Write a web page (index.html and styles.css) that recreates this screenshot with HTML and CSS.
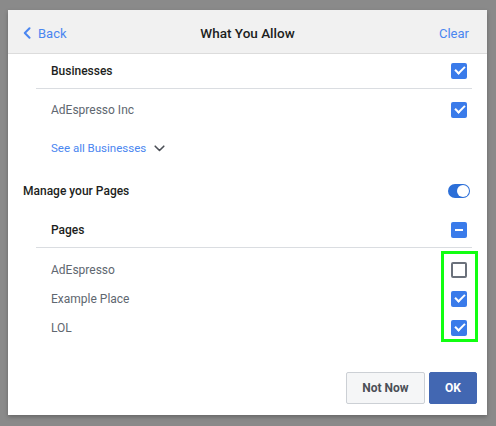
FILE: index.html
```html
<!DOCTYPE html>
<html>
<head>
<meta charset="utf-8">
<link rel="stylesheet" href="styles.css">
</head>
<body>
<div class="dialog">
  <div class="header">
    <a class="hlink back">
      <svg width="8" height="12" viewBox="0 0 8 12"><path d="M6.5 1.2 L1.8 6 L6.5 10.8" fill="none" stroke="#4a86f0" stroke-width="2" stroke-linecap="round" stroke-linejoin="round"/></svg>
      <span>Back</span>
    </a>
    <div class="title">What You Allow</div>
    <a class="hlink clear">Clear</a>
  </div>
  <div class="content">
    <div class="row head sub">
      <span class="label strong">Businesses</span>
      <span class="cb on"></span>
    </div>
    <div class="row item-tall sub">
      <span class="label muted">AdEspresso Inc</span>
      <span class="cb on"></span>
    </div>
    <div class="row seeall sub">
      <span class="link">See all Businesses</span>
      <svg class="chev" width="11" height="7" viewBox="0 0 11 7"><path d="M1.2 1.2 L5.5 5.5 L9.8 1.2" fill="none" stroke="#4b4f56" stroke-width="1.6" stroke-linecap="round" stroke-linejoin="round"/></svg>
    </div>
    <div class="row section">
      <span class="label strong">Manage your Pages</span>
      <span class="toggle"><span class="knob"></span></span>
    </div>
    <div class="row head sub pages">
      <span class="label strong">Pages</span>
      <span class="cb mixed"></span>
    </div>
    <div class="items">
      <div class="highlight"></div>
      <div class="row item sub">
        <span class="label muted">AdEspresso</span>
        <span class="cb off"></span>
      </div>
      <div class="row item sub">
        <span class="label muted">Example Place</span>
        <span class="cb on"></span>
      </div>
      <div class="row item sub">
        <span class="label muted">LOL</span>
        <span class="cb on"></span>
      </div>
    </div>
  </div>
  <div class="footer">
    <button class="btn secondary">Not Now</button>
    <button class="btn primary">OK</button>
  </div>
</div>
</body>
</html>
```

FILE: styles.css
```css
html, body {
  margin: 0;
  padding: 0;
}
body {
  background: #8a8a8a;
  width: 496px;
  height: 426px;
  padding: 10px 0 0 8px;
  box-sizing: border-box;
  font-family: Roboto, "Liberation Sans", Arial, sans-serif;
  overflow: hidden;
}
.dialog {
  width: 479px;
  height: 405px;
  background: #fff;
  display: flex;
  flex-direction: column;
  box-shadow: 0 2px 4px rgba(0,0,0,0.25);
}
.header {
  height: 40px;
  padding: 3px 18px 0 15px;
  background: #f1f1f1;
  border-bottom: 1px solid #dcdcdc;
  display: flex;
  align-items: center;
  justify-content: space-between;
  position: relative;
}
.hlink {
  color: #4a86f0;
  font-size: 13px;
  display: flex;
  align-items: center;
  gap: 7px;
}
.title {
  position: absolute;
  left: 0;
  right: 0;
  top: 3px;
  bottom: 0;
  display: flex;
  align-items: center;
  justify-content: center;
  font-size: 13.5px;
  font-weight: 500;
  color: #1c1e21;
  pointer-events: none;
}
.content {
  flex: 1;
  display: flex;
  flex-direction: column;
}
.row {
  display: flex;
  align-items: center;
  justify-content: space-between;
  padding-right: 20px;
  padding-left: 15px;
}
.row.sub {
  margin-left: 28px;
}
.row.head {
  height: 34px;
  border-bottom: 1px solid #dadde1;
  margin-right: 15px;
  padding-right: 5px;
}
.row.pages {
  height: 35px;
}
.row.item-tall {
  height: 42px;
}
.row.seeall {
  height: 34px;
  justify-content: flex-start;
  gap: 8px;
}
.row.section {
  height: 47px;
  padding-top: 4px;
  box-sizing: border-box;
}
.items {
  position: relative;
  padding-top: 7px;
}
.row.item {
  height: 29px;
}
.label {
  font-size: 12px;
}
.strong {
  font-weight: 500;
  color: #1c1e21;
}
.muted {
  color: #606770;
}
.link {
  font-size: 11.5px;
  color: #4a86f0;
}
.chev {
  margin-top: 1px;
}
.cb {
  width: 16px;
  height: 16px;
  box-sizing: border-box;
  border-radius: 2px;
  position: relative;
  flex: none;
}
.cb.on, .cb.mixed {
  background: #3a7bea;
}
.cb.on::after {
  content: "";
  position: absolute;
  left: 4px;
  top: 3px;
  width: 8px;
  height: 4px;
  border-left: 2px solid #fff;
  border-bottom: 2px solid #fff;
  transform: rotate(-45deg);
  transform-origin: center;
}
.cb.mixed::after {
  content: "";
  position: absolute;
  left: 4px;
  top: 7px;
  width: 8px;
  height: 2px;
  background: #fff;
}
.cb.off {
  border: 2px solid #6b717b;
  background: #fff;
}
.toggle {
  width: 22px;
  height: 14px;
  border-radius: 7px;
  background: #2c6fd8;
  position: relative;
  margin-right: -3px;
}
.knob {
  position: absolute;
  right: 1px;
  top: 1px;
  width: 12px;
  height: 12px;
  border-radius: 50%;
  background: #fff;
}
.highlight {
  position: absolute;
  left: 433px;
  top: 3px;
  width: 31px;
  height: 85px;
  border: 3px solid #11ff11;
}
.footer {
  display: flex;
  justify-content: flex-end;
  gap: 4px;
  padding: 0 10px 11px 0;
}
.btn {
  height: 32px;
  font-family: Roboto, "Liberation Sans", Arial, sans-serif;
  font-size: 12px;
  font-weight: bold;
  border-radius: 2px;
  padding: 0;
}
.btn.secondary {
  width: 79px;
  background: #f5f6f7;
  border: 1px solid #ccd0d5;
  color: #4b4f56;
}
.btn.primary {
  width: 48px;
  background: #4267b2;
  border: 1px solid #4267b2;
  color: #fff;
}
```
